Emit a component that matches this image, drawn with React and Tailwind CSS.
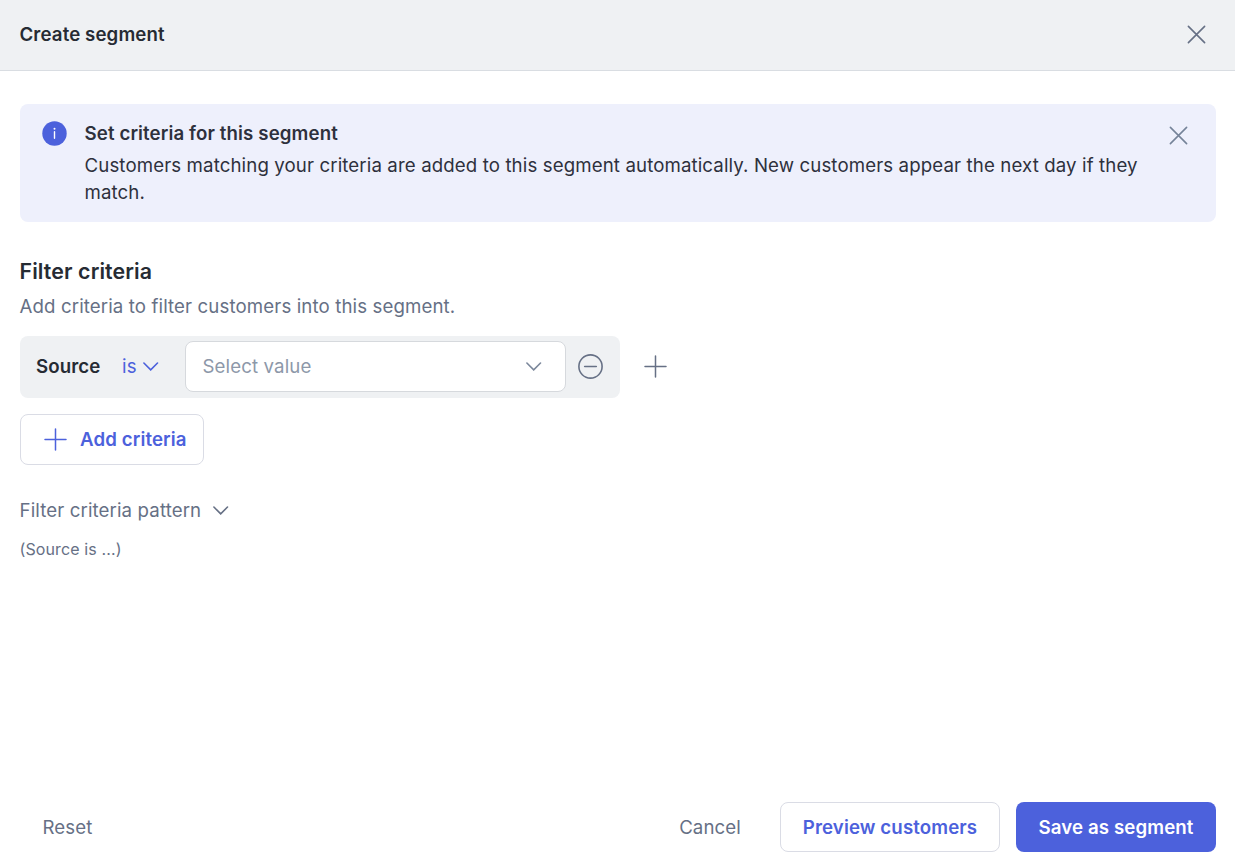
function CloseIcon({ className }) {
  return (
    <svg className={className} width="19" height="19" viewBox="0 0 19 19" fill="none">
      <path d="M1.4 1.4L17.6 17.6M17.6 1.4L1.4 17.6" stroke="currentColor" strokeWidth="1.6" strokeLinecap="round" />
    </svg>
  );
}

function ChevronIcon({ className }) {
  return (
    <svg className={className} width="16" height="9" viewBox="0 0 16 9" fill="none">
      <path d="M0.9 1L7.7 7.9L14.5 1" stroke="currentColor" strokeWidth="1.6" strokeLinecap="round" />
    </svg>
  );
}

function PlusIcon({ className }) {
  return (
    <svg className={className} width="23" height="23" viewBox="0 0 23 23" fill="none">
      <path d="M11.5 1V22M1 11.5H22" stroke="currentColor" strokeWidth="1.5" strokeLinecap="round" />
    </svg>
  );
}

function InfoIcon() {
  return (
    <svg className="mt-[17px] shrink-0" width="25" height="25" viewBox="0 0 25 25" fill="none">
      <circle cx="12.5" cy="12.5" r="12.2" fill="#4c61dc" />
      <circle cx="12.5" cy="7.7" r="1" fill="#fff" />
      <path d="M12.5 10.8V17.2" stroke="#fff" strokeWidth="1.4" strokeLinecap="round" />
    </svg>
  );
}

function MinusCircleIcon({ className }) {
  return (
    <svg className={className} width="25" height="25" viewBox="0 0 25 25" fill="none">
      <circle cx="12.5" cy="12.5" r="11.6" stroke="currentColor" strokeWidth="1.6" />
      <path d="M6.7 12.5H18.3" stroke="currentColor" strokeWidth="1.6" strokeLinecap="round" />
    </svg>
  );
}

function App() {
  return (
    <div className="flex h-screen flex-col overflow-hidden bg-white font-['Inter',sans-serif] text-[18.67px] leading-[27px] tracking-[0.115px] text-[#667085]">
      <header className="flex h-[71px] shrink-0 items-center justify-between border-b border-[#d9dde2] bg-[#eff1f3] pr-[29px] pb-px pl-[19.5px]">
        <h1 className="font-semibold text-[#262b33]">Create segment</h1>
        <button>
          <CloseIcon className="text-[#667085]" />
        </button>
      </header>

      <main className="flex grow flex-col items-start px-5 pt-[33px]">
        <div className="flex h-[118px] w-[1196px] items-start rounded-lg bg-[#eef0fc] pl-[22px]">
          <InfoIcon />
          <div className="ml-[17.5px] w-[1065px] pt-4">
            <h2 className="font-semibold text-[#2e313d]">Set criteria for this segment</h2>
            <p className="mt-[5px] text-[#2e313d]">
              Customers matching your criteria are added to this segment automatically. New customers appear the next
              day if they match.
            </p>
          </div>
          <button className="mt-[22px] mr-[28px] ml-auto">
            <CloseIcon className="text-[#758399]" />
          </button>
        </div>

        <h2 className="mt-[34px] -ml-[0.5px] text-[21.33px] leading-[30px] font-semibold text-[#262b33]">
          Filter criteria
        </h2>
        <p className="mt-[7px] -ml-[0.5px]">Add criteria to filter customers into this segment.</p>

        <div className="mt-4 flex items-center">
          <div className="flex h-[62px] w-[600px] items-center rounded-lg bg-[#eff1f3] pb-px pl-4">
            <span className="w-[86px] font-semibold text-[#262b33]">Source</span>
            <button className="flex w-[63px] items-center gap-[6px] text-[#4c61dc]">
              is
              <ChevronIcon />
            </button>
            <div className="flex h-[51px] w-[381px] items-center justify-between rounded-lg border border-[#d6d9dd] bg-white pr-[23px] pl-[16.5px] text-[#8d98a9]">
              Select value
              <ChevronIcon className="text-[#7b879b]" />
            </div>
            <button className="ml-[12px]">
              <MinusCircleIcon />
            </button>
          </div>
          <button className="mb-px ml-6">
            <PlusIcon />
          </button>
        </div>

        <button className="mt-4 flex h-[51px] w-[184px] items-center gap-[13px] rounded-lg border border-[#dadce5] pl-[23px] font-semibold text-[#4c61dc]">
          <PlusIcon />
          Add criteria
        </button>

        <button className="mt-8 -ml-[0.5px] flex items-center gap-3">
          Filter criteria pattern
          <ChevronIcon />
        </button>
        <p className="mt-3 -ml-[0.5px] text-base leading-[27px]">(Source is ...)</p>
      </main>

      <footer className="flex shrink-0 items-center pr-[19px] pb-[13px] pl-[42.5px]">
        <button>Reset</button>
        <button className="mr-[39px] ml-auto">Cancel</button>
        <button className="h-[50px] w-[220px] rounded-lg border border-[#dadce5] font-semibold text-[#4c61dc]">
          Preview customers
        </button>
        <button className="ml-4 h-[50px] w-[200px] rounded-lg bg-[#4c61dc] font-semibold text-white">
          Save as segment
        </button>
      </footer>
    </div>
  );
}

export default App;
